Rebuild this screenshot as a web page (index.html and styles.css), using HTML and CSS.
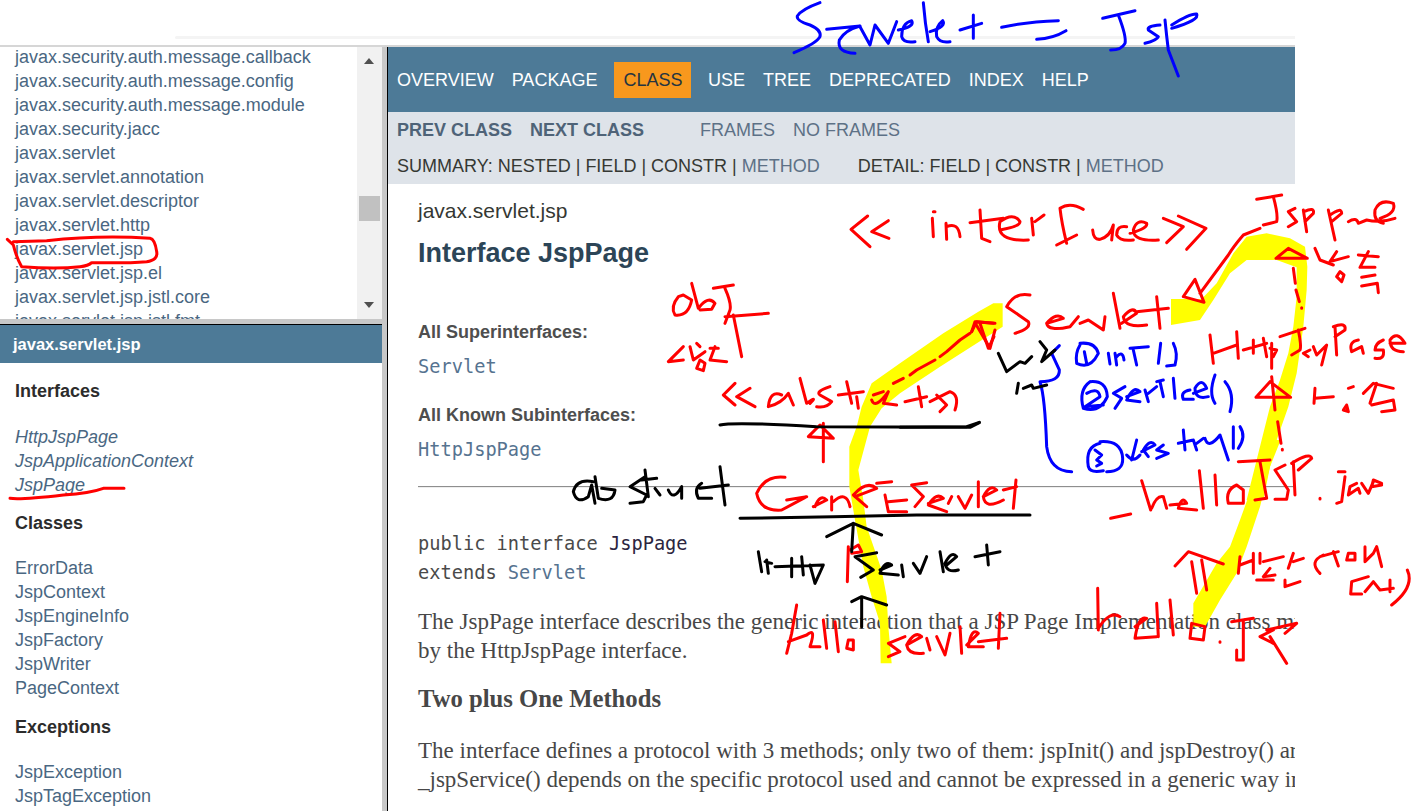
FILE: index.html
```html
<!DOCTYPE html>
<html lang="en">
<head>
<meta charset="utf-8">
<title>JspPage</title>
<link rel="stylesheet" href="styles.css">
</head>
<body>
<div class="page">
  <header class="topbar"><div class="band"></div></header>
  <div class="frames">
    <aside class="side">
      <section class="pkgframe">
        <ul class="pkglist">
          <li>javax.security.auth.message.callback</li>
          <li>javax.security.auth.message.config</li>
          <li>javax.security.auth.message.module</li>
          <li>javax.security.jacc</li>
          <li>javax.servlet</li>
          <li>javax.servlet.annotation</li>
          <li>javax.servlet.descriptor</li>
          <li>javax.servlet.http</li>
          <li>javax.servlet.jsp</li>
          <li>javax.servlet.jsp.el</li>
          <li>javax.servlet.jsp.jstl.core</li>
          <li>javax.servlet.jsp.jstl.fmt</li>
        </ul>
        <div class="scrollbar">
          <span class="arrow-up"></span>
          <span class="thumb"></span>
          <span class="arrow-down"></span>
        </div>
      </section>
      <div class="hsplit"></div>
      <section class="clsframe">
        <h1 class="clshead">javax.servlet.jsp</h1>
        <h2 class="grp grp-first">Interfaces</h2>
        <ul class="clslist ital">
          <li>HttpJspPage</li>
          <li>JspApplicationContext</li>
          <li>JspPage</li>
        </ul>
        <h2 class="grp">Classes</h2>
        <ul class="clslist">
          <li>ErrorData</li>
          <li>JspContext</li>
          <li>JspEngineInfo</li>
          <li>JspFactory</li>
          <li>JspWriter</li>
          <li>PageContext</li>
        </ul>
        <h2 class="grp grp-last">Exceptions</h2>
        <ul class="clslist">
          <li>JspException</li>
          <li>JspTagException</li>
        </ul>
      </section>
    </aside>
    <div class="vsplit"></div>
    <main class="content">
      <nav class="navtop">
        <a class="nav">OVERVIEW</a>
        <a class="nav">PACKAGE</a>
        <a class="nav active">CLASS</a>
        <a class="nav">USE</a>
        <a class="nav">TREE</a>
        <a class="nav">DEPRECATED</a>
        <a class="nav">INDEX</a>
        <a class="nav">HELP</a>
      </nav>
      <div class="subnav">
        <div class="subrow">
          <b class="prev">PREV CLASS</b><b class="prev">NEXT CLASS</b>
          <a class="frames-link first">FRAMES</a><a class="frames-link">NO FRAMES</a>
        </div>
        <div class="subrow lower">
          <span class="sum">SUMMARY: NESTED | FIELD | CONSTR | <a class="lnk">METHOD</a></span>
          <span class="det">DETAIL: FIELD | CONSTR | <a class="lnk">METHOD</a></span>
        </div>
      </div>
      <article class="doc">
        <div class="pkgname">javax.servlet.jsp</div>
        <h1 class="title">Interface JspPage</h1>
        <dl class="defs">
          <dt>All Superinterfaces:</dt>
          <dd>Servlet</dd>
          <dt>All Known Subinterfaces:</dt>
          <dd>HttpJspPage</dd>
        </dl>
        <hr class="rule">
        <pre class="sig">public interface <span class="name">JspPage</span>
extends <span class="code-link">Servlet</span></pre>
        <p class="para">The JspPage interface describes the generic interaction that a JSP Page Implementation class must satisfy; pages that use the HTTP protocol are described<br>by the HttpJspPage interface.</p>
        <h3 class="para-head">Two plus One Methods</h3>
        <p class="para">The interface defines a protocol with 3 methods; only two of them: jspInit() and jspDestroy() are part of this interface as the signature of the third method:<br>_jspService() depends on the specific protocol used and cannot be expressed in a generic way in Java.</p>
      </article>
    </main>
  </div>
</div>

<svg class="ink" width="1412" height="811" viewBox="0 0 1412 811" aria-hidden="true">
  <!-- yellow highlighter -->
  <g transform="translate(650 280) scale(.33333)">
    <path class="hl" d="M1030,70 L985,95 L880,160 L750,250 L665,310 L635,380 L620,440 L598,500 L598,620 L615,720 L640,860 L665,950 L690,1030 L692,1150 L725,1150 L715,1040 L710,950 L695,870 L650,740 L640,660 L625,570 L660,440 L695,385 L750,340 L870,260 L1058,140 L1058,70 Z"/>
  </g>
  <g transform="translate(900 180) scale(.33333)">
    <path class="hl" d="M813,357 L905,357 L950,310 L1000,220 L1040,170 L1100,160 L1170,175 L1215,200 L1222,260 L1220,330 L1210,440 L1190,580 L1165,680 L1130,780 L1110,860 L1090,960 L1040,960 L1060,880 L1090,760 L1110,680 L1140,600 L1165,520 L1180,440 L1190,350 L1190,262 L1130,240 L1040,240 L990,280 L940,360 L900,420 L813,435 Z"/>
  </g>
  <g transform="translate(1040 440) scale(.33333)">
    <path class="hl" d="M670,0 L640,130 L600,240 L570,320 L530,370 L460,490 L460,560 L495,560 L540,480 L590,400 L620,320 L660,200 L690,80 L722,0 Z"/>
  </g>

  <!-- top: Servlet = JSP -->
  <g class="blue" transform="translate(760 0) scale(.33333)">
    <path d="M180,8 Q125,28 112,48 Q108,62 150,75 Q185,90 180,110 Q170,130 102,158"/>
    <path d="M200,88 L300,78 Q255,90 238,120 Q230,158 285,160"/>
    <path d="M300,80 L330,135 L345,75 L385,130 L410,65"/>
    <path d="M415,90 Q465,80 455,62 Q425,70 425,110 Q430,130 465,125"/>
    <path d="M490,8 Q495,70 505,125"/>
    <path d="M510,95 Q560,80 548,62 Q525,80 530,110 Q540,130 570,125"/>
    <path d="M600,90 L665,70 M640,45 L640,115"/>
    <path d="M725,82 Q800,65 895,62 M830,118 Q880,115 918,92"/>
    <path d="M1028,55 L1125,32 M1075,45 Q1100,110 1095,130 Q1085,150 1052,150"/>
    <path d="M1200,75 Q1160,78 1165,90 L1195,110 Q1190,122 1155,130"/>
    <path d="M1215,60 Q1220,110 1225,150 L1255,228 M1235,75 Q1290,40 1310,42 Q1320,60 1235,85"/>
  </g>

  <!-- left frame marks -->
  <g class="red" transform="scale(.33333)">
    <path d="M22,718 L40,735 Q50,775 65,800 Q170,808 240,800 Q265,798 275,788 Q380,790 440,785 Q475,780 470,755 Q465,718 450,715 Q300,705 140,722 L40,725"/>
  </g>
  <g class="red" transform="translate(0 400) scale(.33333)">
    <path d="M30,295 Q60,300 190,285 Q270,280 310,265 L372,265"/>
  </g>

  <!-- << -->
  <g class="red" transform="translate(385 0) scale(.33333)">
    <path d="M1448,648 L1398,688 L1455,740 M1510,662 L1460,695 L1512,715"/>
  </g>

  <!-- right diagram -->
  <g class="red" transform="translate(900 180) scale(.33333)">
    <path d="M100,95 L105,95 M97,115 L100,170 M138,130 L140,178 M140,140 Q175,125 180,170"/>
    <path d="M210,128 L310,115 M240,90 L245,175 L270,185"/>
    <path d="M300,150 Q360,140 360,125 Q340,95 300,125 Q285,185 385,180 M395,115 L400,165 M405,125 L432,105"/>
    <path d="M550,88 Q510,65 480,85 Q485,130 500,190 M470,195 L530,165"/>
    <path d="M578,150 Q580,180 600,178 Q630,170 640,135 L635,180 M680,140 Q650,135 650,165 Q660,185 700,180"/>
    <path d="M690,160 Q745,145 740,130 Q710,115 700,150 Q700,185 775,180 M790,115 L850,140 L800,188 M835,108 L918,145 L860,208"/>
    <path d="M1070,58 L1145,45 M1120,50 Q1135,105 1130,125 L1090,135 M1185,85 L1165,95 L1190,125 L1165,140"/>
    <path d="M1210,90 L1220,155 M1212,95 Q1245,80 1240,100 L1215,125 M1285,90 L1305,180 M1290,105 Q1325,80 1325,100 L1295,125"/>
    <path d="M1345,125 Q1370,110 1375,130 L1400,120 Q1440,130 1485,115 M1440,115 Q1490,100 1480,70 Q1440,55 1425,90 Q1420,125 1450,130"/>
    <path d="M1080,145 L1030,165 Q1000,200 985,225 L900,340 M885,298 L850,350 L912,367 Z"/>
    <path d="M1165,205 L1128,235 L1222,235 Z M1180,265 L1186,310 M1188,330 L1198,365 M1205,383 L1205,385"/>
    <path d="M1245,205 L1260,240 L1300,255 M1310,215 L1290,245 L1345,230 M1320,275 L1310,290 L1325,305 L1332,285 Z M1375,225 L1435,230 M1405,215 L1380,262 L1425,262 M1385,292 L1425,285 M1385,318 L1432,310 L1435,338"/>
    <path d="M390,345 Q345,335 320,380 L385,425 Q395,445 345,460"/>
    <path d="M440,430 L490,415 Q470,395 440,430 Q445,455 510,440 L535,410 M540,430 L565,420 L610,450 L615,410"/>
    <path d="M640,340 L660,445 M665,430 L710,400 Q700,375 670,410 Q675,445 740,435 M710,395 L805,385 M770,350 L780,445"/>
    <path d="M930,465 L940,550 M1010,455 L1015,535 M940,520 L1010,495 M1030,510 L1100,490 M1060,480 L1060,520 M1090,475 L1100,530 M1115,490 L1115,565 M1110,505 L1130,510 L1120,530"/>
    <path d="M1140,470 L1215,445 M1195,450 Q1205,500 1200,510 L1175,525 M1230,510 L1210,520 L1225,530 M1240,500 L1250,525 L1280,495 L1265,555"/>
    <path d="M1305,440 L1310,525 M1300,440 Q1340,425 1335,450 L1305,470 M1375,480 Q1345,485 1355,515 L1385,500 L1390,520"/>
    <path d="M1450,480 Q1425,490 1425,510 L1450,510 Q1455,540 1425,535 M1470,490 L1515,490 Q1490,450 1470,480 Q1470,515 1510,515"/>
    <path d="M1110,605 L1068,652 L1172,652 Z M1115,590 L1125,690 M1133,725 L1143,790 M1147,808 L1147,810"/>
    <path d="M1245,625 L1242,670 M1245,655 L1300,650 M1345,625 L1360,620 M1340,675 L1330,690 L1345,695 Z M1390,640 L1420,610 L1480,625 M1430,610 L1410,670 M1415,675 L1480,660 L1485,690 L1445,695"/>
    <path d="M285,430 L225,425 L215,455 M225,428 L270,505 L285,450"/>
  </g>
  <g class="blue" transform="translate(900 180) scale(.33333)">
    <path d="M478,497 L455,520 L478,570 Q480,605 420,605 Q435,650 440,800 Q450,875 515,875"/>
    <path d="M540,495 Q525,520 530,550 Q570,570 595,520 Q585,485 540,490 M553,515 L560,550"/>
    <path d="M625,520 L630,552 M645,520 L650,555 M650,530 Q668,510 672,540 M690,505 L745,500 M700,510 L710,555 M782,490 L775,550 M820,490 Q835,520 825,555 L800,558"/>
    <path d="M570,605 Q535,630 550,685 Q600,700 622,650 Q620,600 570,605 M560,640 Q595,620 600,650 L555,680 L610,675"/>
    <path d="M675,620 L640,640 L665,655 L645,685 M680,650 L720,635 Q700,615 680,660 L720,665 M735,630 L745,665 M745,640 L770,620 M770,605 L790,600 M780,605 L790,650 M820,595 L825,655 M870,630 Q840,635 850,658 L880,658"/>
    <path d="M880,640 L920,625 Q905,590 885,625 Q885,660 925,650 M945,585 Q925,640 945,670 M975,605 Q1005,640 990,695"/>
    <path d="M600,790 Q555,800 565,860 Q570,880 610,872 M620,875 Q670,875 668,835 Q665,780 600,785 M585,810 L605,825 L590,840 L605,850 L590,858"/>
    <path d="M710,780 L695,840 M680,825 Q700,850 720,825 M725,815 L765,795 Q750,775 730,810 L745,830 M790,795 L770,810 L805,820 L770,835"/>
    <path d="M835,790 L880,780 M850,750 L855,810 M880,780 L890,810 M890,790 L910,775 M915,775 Q925,810 960,765 L985,840 M1000,740 L1000,805 M1020,740 Q1040,770 1015,805"/>
  </g>
  <g class="black" transform="translate(900 180) scale(.33333)">
    <path d="M295,520 L320,575 L360,545 L375,550 L395,530 M420,485 L440,510 L425,545 L465,510 M350,640 L355,610 M370,625 L395,615 L400,625 L440,615"/>
    <path d="M0,742 L200,740 L238,727"/>
  </g>

  <!-- middle diagram -->
  <g class="red" transform="translate(650 280) scale(.33333)">
    <path d="M85,50 Q60,80 75,105 Q115,110 125,60 L100,45 Z M125,10 L145,85 Q175,45 195,70 L185,88 L150,90"/>
    <path d="M190,25 L250,15 M225,25 Q245,70 240,90 L225,130 M225,110 L355,100 M250,105 L275,230"/>
    <path d="M100,200 L55,245 L100,240 M120,200 L130,240 L165,215 M140,190 L150,200 M180,205 L205,205 M195,200 L180,240 L230,245 M150,240 L140,265 L160,272 L165,250 Z"/>
    <path d="M255,310 L220,345 L255,375 M300,325 L260,350 L315,380 M395,345 Q360,330 355,380 Q395,370 415,340 L430,375"/>
    <path d="M450,295 L470,370 Q505,345 480,370 M540,320 Q495,335 510,345 L545,365 Q530,385 500,380 M565,345 L640,335 M590,305 L605,370 M620,350 L625,385"/>
    <path d="M665,360 Q675,390 715,335 L700,370 L740,375 M765,365 L830,350 M805,320 L815,380 M840,365 L900,335 Q930,345 915,390 M860,345 L890,375 L870,395"/>
    <path d="M475,470 L550,475 L510,435 Z M520,430 L520,545"/>
    <path d="M405,592 Q345,585 320,640 Q330,695 395,690 L470,650 L410,660 M490,680 L530,660 Q510,640 495,680 M545,650 L545,690 M550,665 Q590,630 600,680"/>
    <path d="M615,650 L680,625 Q650,600 610,645 L650,680 M680,610 L725,605 M705,645 L715,695 L770,695 M715,665 L770,660"/>
    <path d="M830,608 L785,615 L820,650 L795,680 M835,670 L880,655 Q860,635 835,675 L890,695 M895,670 L905,650 M925,650 L945,685 L965,645"/>
    <path d="M985,605 L985,680 M1000,650 L1040,630 Q1020,610 1000,650 Q1005,690 1060,660 M1060,630 L1100,620 M1098,600 L1090,685"/>
    <path d="M600,810 L625,795 L635,815 L605,820 M595,800 L592,905"/>
    <path d="M440,975 L425,1060 L410,1120 M415,1085 L470,1065 Q500,1040 480,1100 L510,1100 M520,1020 L530,1105 M555,1025 L565,1115 M595,1080 L590,1105 L610,1110 L610,1080 Z"/>
    <path d="M765,1070 L715,1090 L750,1115 L715,1130 M770,1095 L815,1070 Q795,1050 770,1095 Q775,1125 820,1120 M830,1075 L840,1110 M860,1070 L885,1125 L900,1060"/>
    <path d="M930,1040 L935,1120 M950,1095 L985,1060 Q965,1040 955,1100 L1000,1100 M985,1085 L1070,1075 M1050,1000 L1045,1105"/>
    <path d="M1030,130 L980,125 L965,155 M990,130 L1015,205 L1032,170 M960,160 L930,180 L890,215 L870,230 M855,240 L800,270 L780,285 M760,295 L730,310 M700,335 L670,345"/>
  </g>
  <g class="black" transform="translate(650 280) scale(.33333)">
    <path d="M210,435 Q250,425 500,440 L960,442 L988,428"/>
    <path d="M270,715 L550,710 L800,705 L1140,705"/>
    <path d="M530,770 L610,730 L695,765 M610,730 L605,815"/>
    <path d="M325,815 L335,875 M345,845 L365,850 M350,840 L355,880 M425,835 L425,890 M455,830 L460,885 M375,860 L520,855 L495,910 M480,855 L495,910"/>
    <path d="M680,818 L615,830 L670,870 L632,892 M690,870 L725,855 Q705,840 690,880 L745,885 M755,855 L760,890 M790,850 L810,880 L830,830"/>
    <path d="M870,815 L880,875 M890,855 L920,830 Q905,810 885,850 Q890,880 925,870 M975,830 L1050,815 M1010,795 L1015,855"/>
    <path d="M605,965 L635,950 L710,975 M635,950 L635,1040"/>
  </g>
  <g class="black" transform="translate(560 460) scale(.33333)">
    <path d="M100,65 Q50,55 40,95 Q50,135 85,110 L95,75 L105,130 M105,50 L115,115 Q160,130 165,90 L125,85"/>
    <path d="M255,50 L210,80 L260,105 L250,125 L210,130 M245,60 L290,55 M255,30 L265,110 M285,85 L300,105"/>
    <path d="M325,90 Q340,125 365,80 L365,115 M425,70 Q400,85 415,115 L455,115 M420,85 L505,75 M480,20 L495,135"/>
  </g>

  <!-- lower right -->
  <g class="red" transform="translate(1040 440) scale(.33333)">
    <path d="M212,235 L272,222 M305,122 L332,210 M335,205 Q350,165 370,170 L380,205 M390,195 L440,190 Q425,165 415,205 L470,210"/>
    <path d="M478,92 L490,205 M525,105 L530,195 M590,135 Q555,150 565,190 L610,190 L610,150 Z"/>
    <path d="M595,65 L690,60 M660,65 L680,175 L645,180 M735,75 L705,90 L745,150 L740,178 L705,178 M760,65 L765,165 M755,70 Q810,35 815,55 L775,90"/>
    <path d="M840,175 L840,177 M915,110 L905,185 L890,190 M895,95 L915,95 M950,130 L930,140 L925,165 L955,145 L960,160 M965,130 L985,160 L1000,125 M1025,130 L1000,120 L995,140 L1025,135"/>
    <path d="M405,378 L445,335 L550,372 M455,365 L470,460 M485,360 L500,450"/>
    <path d="M600,350 L595,400 M640,340 L640,400 M600,375 L640,360 M660,340 L660,370 M670,365 L730,350 M690,385 L670,410 L705,405 M650,420 L700,420 M760,340 L745,385 M760,365 L790,355 M735,420 L735,440 L780,425"/>
    <path d="M850,345 Q805,365 840,400 M840,350 L895,335 M880,335 L895,378 M925,340 L920,360 L945,360 L945,340 Z M975,320 L975,365 L1000,340 L1010,320 L1025,380"/>
    <path d="M985,410 L935,425 L932,462 L965,462 M975,455 L1000,425 L1020,450 L1060,445 M1050,420 L1050,455 M1102,390 Q1125,440 1055,495"/>
    <path d="M173,445 L175,570 M175,565 Q210,510 240,530 M285,560 L320,535 Q295,525 285,595 L350,590 M350,490 L355,590 M390,480 L400,585"/>
    <path d="M455,550 L450,595 L490,600 L495,560 Z M540,605 L540,607 M575,545 L640,535 M610,540 L610,660 L590,660 L590,630"/>
    <path d="M700,570 L660,590 L700,610 M690,590 L740,670 M680,570 L770,550 L735,580"/>
  </g>
</svg>
</body>
</html>
```
FILE: styles.css
```css
* { box-sizing: border-box; }
html, body { margin: 0; padding: 0; height: 811px; overflow: hidden; background: #fff; }
body { font-family: "Liberation Sans", Arial, sans-serif; color: #353833; position: relative; }
ul { list-style: none; margin: 0; padding: 0; }
h1, h2, h3, p, dl, dd, pre, hr { margin: 0; }

.page { width: 1295px; height: 811px; display: flex; flex-direction: column; }
.topbar { height: 47px; flex: none; border-bottom: 2px solid #d6d6d6; padding: 36px 0 0 175px; }
.band { height: 3px; background: #f4f4f4; border-radius: 3px 0 0 3px; }
.frames { flex: 1; display: flex; min-height: 0; }

.side { width: 382px; flex: none; display: flex; flex-direction: column; }
.pkgframe { height: 272px; flex: none; display: flex; overflow: hidden; }
.pkglist { flex: 1; margin-top: -2px; padding-left: 15px; font-size: 18px; line-height: 24px; color: #4a6782; white-space: nowrap; }
.scrollbar { width: 25px; flex: none; background: #f1f1f1; position: relative; }
.thumb { position: absolute; left: 2px; top: 149px; width: 21px; height: 25px; background: #c1c1c1; }
.arrow-up, .arrow-down { position: absolute; left: 7px; width: 0; height: 0; border-left: 5.5px solid transparent; border-right: 5.5px solid transparent; }
.arrow-up { top: 11px; border-bottom: 6px solid #505050; }
.arrow-down { bottom: 11px; border-top: 6px solid #505050; }
.hsplit { height: 6px; flex: none; background: #c8c8c8; border-bottom: 1px solid #000; }
.clsframe { flex: 1; overflow: hidden; }
.clshead { height: 38px; background: #4d7a97; color: #fff; font-size: 16.5px; line-height: 38px; font-weight: 700; padding-left: 13px; }
.grp { font-size: 18px; line-height: 24px; font-weight: 700; color: #2c2c2c; padding-left: 15px; margin-top: 14px; margin-bottom: 21px; }
.grp-first { margin-top: 16px; margin-bottom: 22px; }
.grp-last { margin-top: 15px; }
.clslist { padding-left: 15px; font-size: 18px; line-height: 24px; color: #4a6782; }
.ital { font-style: italic; }

.vsplit { width: 6px; flex: none; background: #c8c8c8; border-right: 1px solid #000; }
.content { flex: 1; min-width: 0; overflow: hidden; display: flex; flex-direction: column; }
.navtop { height: 65px; flex: none; background: #4d7a97; display: flex; align-items: center; font-size: 18px; }
.nav { color: #fff; line-height: 36px; padding: 0 9px; }
.nav.active { background: #f8981d; color: #253441; margin: 0 7.5px 0 8px; }
.subnav { height: 72px; flex: none; background: #dee3e9; padding: 0 9px; font-size: 18px; }
.subrow { display: flex; height: 35px; align-items: center; padding-top: 1px; }
.lower { height: 37px; padding-top: 2px; }
.prev { color: #4f6378; margin-right: 18px; }
.frames-link { color: #5d7186; margin-right: 18px; }
.frames-link.first { margin-left: 38px; }
.sum, .det { color: #353833; white-space: nowrap; }
.det { margin-left: 38px; }
.lnk { color: #5d7186; }

.doc { flex: 1; padding-left: 30px; white-space: nowrap; overflow: hidden; }
.pkgname { font-size: 21px; line-height: 24px; margin-top: 15px; }
.title { font-size: 27px; line-height: 32px; font-weight: 700; color: #2c4557; margin-top: 14px; }
.defs { margin-top: 51px; }
.defs dt { font-size: 18px; line-height: 24px; font-weight: 700; color: #4e4e4e; }
.defs dd { font-family: "DejaVu Sans Mono", monospace; font-size: 18.67px; line-height: 28px; color: #567390; margin-top: 9px; margin-bottom: 22px; }
.rule { border: 0; border-top: 1px solid #8e8e8e; border-bottom: 1px solid #eee; height: 2px; }
.sig { font-family: "DejaVu Sans Mono", monospace; font-size: 18.67px; line-height: 29px; color: #4a4a4a; margin-top: 41px; }
.name { color: #2c2540; }
.code-link { color: #567390; }
.para { font-family: "Liberation Serif", Georgia, serif; font-size: 23px; line-height: 29px; color: #474747; margin-top: 20px; }
.para-head { font-family: "Liberation Serif", Georgia, serif; font-size: 24.7px; line-height: 28px; font-weight: 700; color: #474747; margin-top: 20px; }
.para-head + .para { margin-top: 23px; }

.ink { position: absolute; left: 0; top: 0; pointer-events: none; }
.ink path { fill: none; stroke-width: 9; stroke-linecap: round; stroke-linejoin: round; }
.ink .hl { fill: #ffff00; stroke: none; }
.red path { stroke: #ff0000; }
.blue path { stroke: #0000ff; }
.black path { stroke: #000; }
```
